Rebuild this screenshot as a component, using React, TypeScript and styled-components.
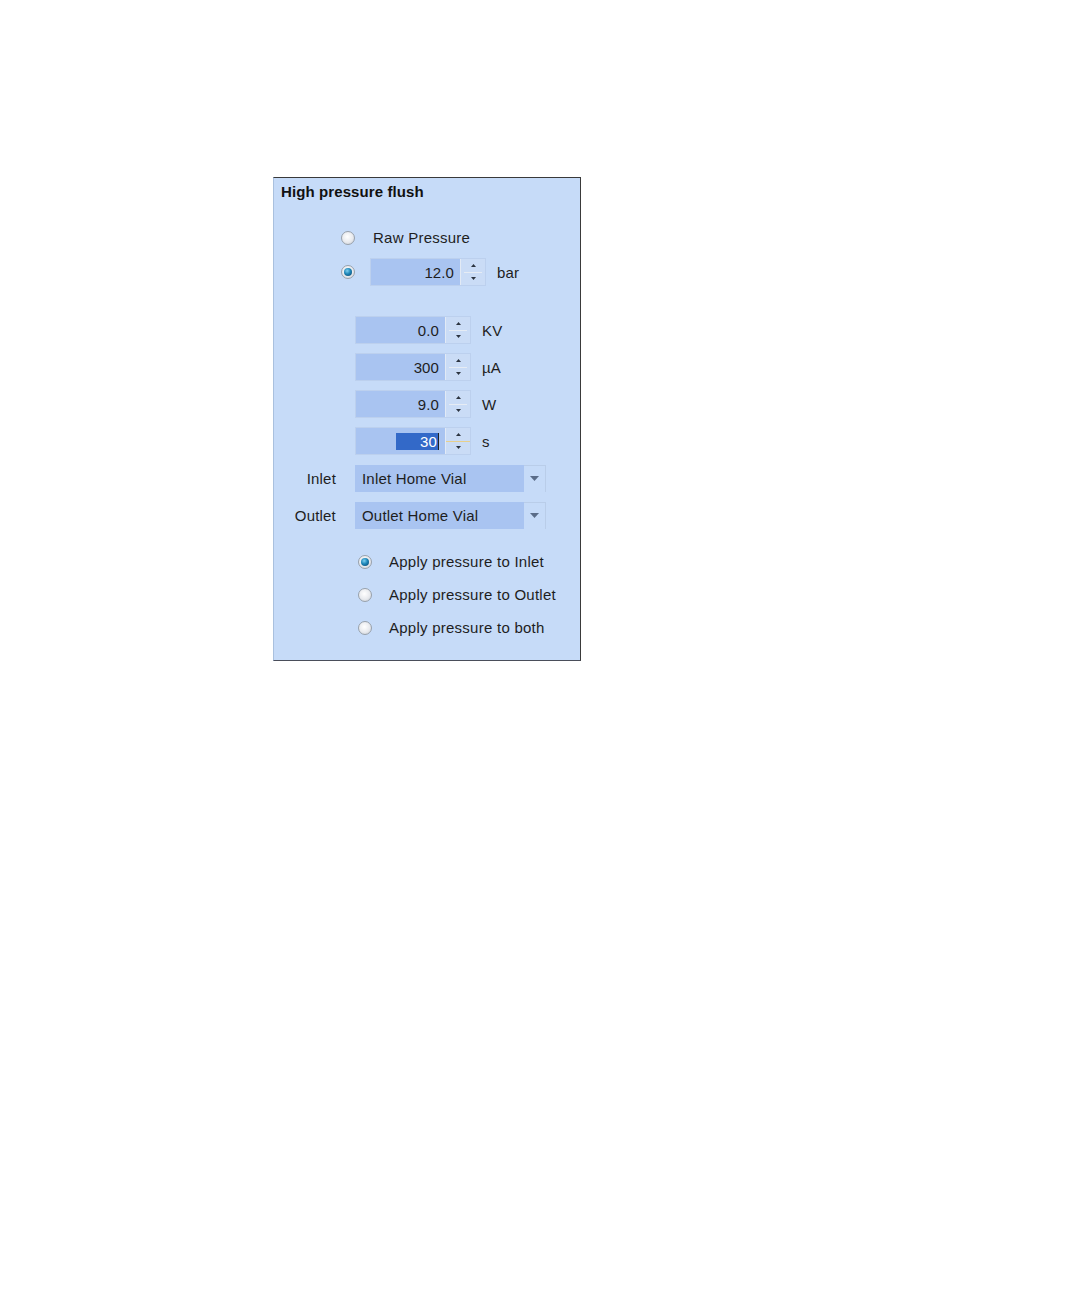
import * as React from "react";
import styled, { createGlobalStyle } from "styled-components";

const GlobalStyle = createGlobalStyle`
  html, body {
    margin: 0;
    padding: 0;
    background: #ffffff;
  }
  body {
    font-family: "Liberation Sans", Arial, sans-serif;
    color: #1e1e1e;
  }
`;

const Page = styled.div`
  padding: 177px 0 0 273px;
`;

const Panel = styled.div`
  box-sizing: border-box;
  width: 308px;
  height: 484px;
  background: #c6dbf8;
  border-top: 1px solid #3a3a3a;
  border-right: 1px solid #3a3a3a;
  border-bottom: 1px solid #4a4e5a;
  border-left: 1px solid #a9c0de;
  display: flex;
  flex-direction: column;
`;

const Title = styled.div`
  margin: 5px 0 0 7px;
  font-size: 15px;
  line-height: 18px;
  font-weight: bold;
  letter-spacing: 0.1px;
  color: #111;
`;

const ModeGroup = styled.div`
  margin: 23px 0 0 67px;
  display: flex;
  flex-direction: column;
  gap: 6px;
`;

const Row = styled.div<{ $gap?: number }>`
  display: flex;
  align-items: center;
  height: 28px;
  gap: ${(p) => p.$gap ?? 15}px;
`;

const RadioDot = styled.span<{ $checked?: boolean }>`
  box-sizing: border-box;
  width: 14px;
  height: 14px;
  border-radius: 50%;
  flex: none;
  border: 1px solid #98a1ab;
  background: radial-gradient(circle at 45% 40%, #ffffff 0%, #e8eaee 55%, #c4c9d0 100%);
  display: flex;
  align-items: center;
  justify-content: center;

  &::after {
    content: "";
    display: ${(p) => (p.$checked ? "block" : "none")};
    width: 8px;
    height: 8px;
    border-radius: 50%;
    background: radial-gradient(circle at 40% 35%, #7fd0f0 0%, #1d86b8 45%, #0b3e66 100%);
  }
`;

const Label = styled.span`
  font-size: 15px;
  line-height: 18px;
  letter-spacing: 0.25px;
  white-space: nowrap;
`;

const Spin = styled.div`
  box-sizing: border-box;
  display: flex;
  width: 116px;
  height: 28px;
  border: 1px solid #bcd0ee;
  background: #a9c4f1;
`;

const SpinValue = styled.div`
  flex: 1;
  display: flex;
  align-items: center;
  justify-content: flex-end;
  padding-right: 6px;
  font-size: 15px;
  letter-spacing: 0.1px;
`;

const Selected = styled.span`
  background: #3369c8;
  color: #fff;
  padding: 0 1px 0 24px;
  line-height: 17px;
  border-right: 1px solid #222;
`;

const SpinButtons = styled.div<{ $focused?: boolean }>`
  box-sizing: border-box;
  width: 25px;
  display: flex;
  flex-direction: column;
  background: #cadcf6;
  border-left: 1px solid #e2eaf5;

  & > span {
    flex: 1;
    display: flex;
    align-items: center;
    justify-content: center;
  }
  & > i {
    height: 1px;
    background: ${(p) => (p.$focused ? "#e8d08c" : "#e6ecf4")};
    margin: 0 ${(p) => (p.$focused ? "0" : "3px")};
  }
`;

const Unit = styled.span`
  font-size: 15px;
  letter-spacing: 0.2px;
  margin-left: 11px;
`;

const Grid = styled.div`
  margin-top: 30px;
  display: grid;
  grid-template-columns: 62px auto;
  column-gap: 19px;
  row-gap: 9px;
  align-items: center;
`;

const FieldLabel = styled.span`
  grid-column: 1;
  justify-self: end;
  font-size: 15px;
  letter-spacing: 0.2px;
`;

const FieldCell = styled.div`
  grid-column: 2;
  display: flex;
  align-items: center;
  height: 28px;
`;

const Combo = styled.div`
  box-sizing: border-box;
  display: flex;
  width: 191px;
  height: 27px;
  background: #a9c4f1;
`;

const ComboText = styled.div`
  flex: 1;
  display: flex;
  align-items: center;
  padding-left: 7px;
  font-size: 15px;
  letter-spacing: 0.2px;
`;

const ComboButton = styled.div`
  box-sizing: border-box;
  width: 22px;
  background: #c6dbf8;
  border-top: 1px solid #b9cde9;
  border-right: 1px solid #b9cde9;
  display: flex;
  align-items: center;
  justify-content: center;
`;

const TargetGroup = styled.div`
  margin: 19px 0 0 84px;
  display: flex;
  flex-direction: column;
  gap: 5px;
`;

const UpArrow = () => (
  <svg width="5" height="3" viewBox="0 0 5 3">
    <path d="M2.5 0 L5 3 L0 3 Z" fill="#2c3440" />
  </svg>
);

const DownArrow = () => (
  <svg width="5" height="3" viewBox="0 0 5 3">
    <path d="M0 0 L5 0 L2.5 3 Z" fill="#2c3440" />
  </svg>
);

const ComboArrow = () => (
  <svg width="9" height="5" viewBox="0 0 9 5">
    <path d="M0 0 L9 0 L4.5 5 Z" fill="#5a6c88" />
  </svg>
);

function SpinBox({ value, focused }: { value: string; focused?: boolean }) {
  return (
    <Spin>
      <SpinValue>{focused ? <Selected>{value}</Selected> : value}</SpinValue>
      <SpinButtons $focused={focused}>
        <span>
          <UpArrow />
        </span>
        <i />
        <span>
          <DownArrow />
        </span>
      </SpinButtons>
    </Spin>
  );
}

function ComboBox({ value }: { value: string }) {
  return (
    <Combo>
      <ComboText>{value}</ComboText>
      <ComboButton>
        <ComboArrow />
      </ComboButton>
    </Combo>
  );
}

const settings = [
  { value: "0.0", unit: "KV" },
  { value: "300", unit: "µA" },
  { value: "9.0", unit: "W" },
  { value: "30", unit: "s", focused: true },
];

const targets = [
  { label: "Apply pressure to Inlet", checked: true },
  { label: "Apply pressure to Outlet" },
  { label: "Apply pressure to both" },
];

export default function App() {
  return (
    <Page>
      <GlobalStyle />
      <Panel>
        <Title>High pressure flush</Title>
        <ModeGroup>
          <Row $gap={18}>
            <RadioDot />
            <Label>Raw Pressure</Label>
          </Row>
          <Row>
            <RadioDot $checked />
            <FieldCell>
              <SpinBox value="12.0" />
              <Unit>bar</Unit>
            </FieldCell>
          </Row>
        </ModeGroup>
        <Grid>
          {settings.map((s) => (
            <FieldCell key={s.unit}>
              <SpinBox value={s.value} focused={s.focused} />
              <Unit>{s.unit}</Unit>
            </FieldCell>
          ))}
          <FieldLabel>Inlet</FieldLabel>
          <FieldCell>
            <ComboBox value="Inlet Home Vial" />
          </FieldCell>
          <FieldLabel>Outlet</FieldLabel>
          <FieldCell>
            <ComboBox value="Outlet Home Vial" />
          </FieldCell>
        </Grid>
        <TargetGroup>
          {targets.map((t) => (
            <Row key={t.label} $gap={17}>
              <RadioDot $checked={t.checked} />
              <Label>{t.label}</Label>
            </Row>
          ))}
        </TargetGroup>
      </Panel>
    </Page>
  );
}
